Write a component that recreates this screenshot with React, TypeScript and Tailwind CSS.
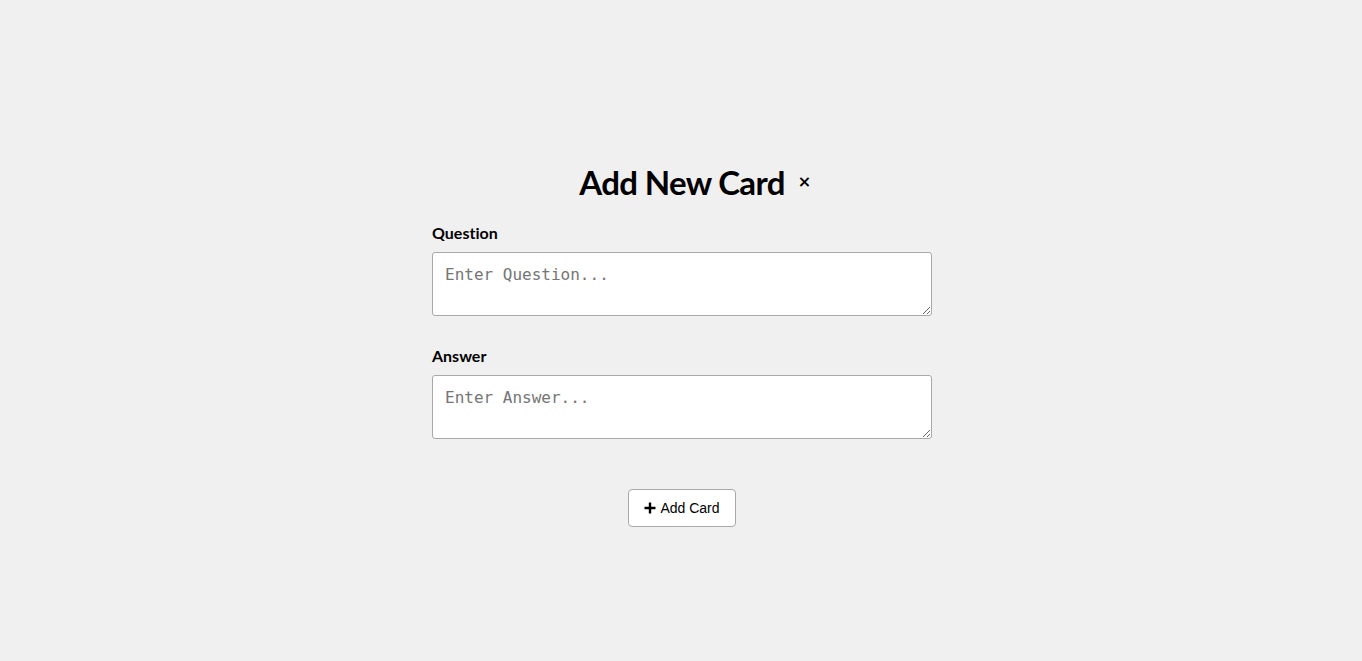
import React from "react";

export default function App() {
  return (
    <div className="min-h-[661px] w-full bg-[#f0f0f0] flex flex-col items-center pl-[2px]">
      <div className="w-[500px] mt-[159px] flex flex-col">
        <div className="flex justify-center">
          <h1 className="relative font-['Lato',sans-serif] font-bold text-[33px] leading-[46px] tracking-[-0.02em] text-black">
            Add New Card
            <span className="absolute left-full top-0 ml-[13px] text-[16px] leading-[46px] font-bold font-['DejaVu_Sans',sans-serif] tracking-normal">×</span>
          </h1>
        </div>
        <label className="mt-[18px] font-['Lato',sans-serif] font-bold text-[16px] leading-[20px] text-black [font-variant-ligatures:none]">Question</label>
        <textarea
          className="mt-[9px] h-[64px] w-full rounded-[3px] border border-[#a9a9a9] bg-white px-[12px] py-[10px] font-['DejaVu_Sans_Mono',monospace] text-[16px] leading-[24px] placeholder:text-[#757575] resize-y"
          placeholder="Enter Question..."
        />
        <label className="mt-[30px] font-['Lato',sans-serif] font-bold text-[16px] leading-[20px] text-black [font-variant-ligatures:none]">Answer</label>
        <textarea
          className="mt-[9px] h-[64px] w-full rounded-[3px] border border-[#a9a9a9] bg-white px-[12px] py-[10px] font-['DejaVu_Sans_Mono',monospace] text-[16px] leading-[24px] placeholder:text-[#757575] resize-y"
          placeholder="Enter Answer..."
        />
        <div className="flex justify-center mt-[50px]">
          <button className="h-[38px] w-[108px] flex items-center justify-center gap-[4px] rounded-[4px] border border-[#a9a9a9] bg-white font-['Liberation_Sans',sans-serif] text-[14px] text-black">
            <svg width="12" height="12" viewBox="0 0 12 12" aria-hidden="true">
              <path d="M6 0.5V11.5M0.5 6H11.5" stroke="black" strokeWidth="2.4" />
            </svg>
            Add Card
          </button>
        </div>
      </div>
    </div>
  );
}
